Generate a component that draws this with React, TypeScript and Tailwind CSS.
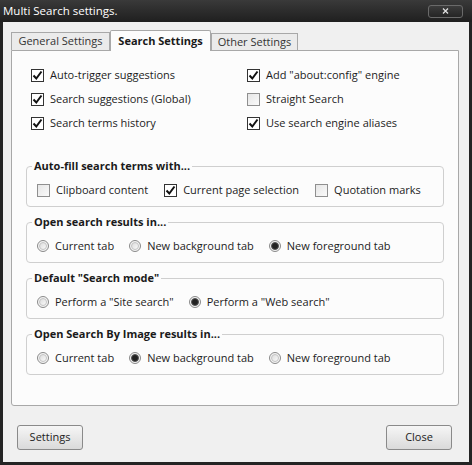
import React from "react";

const font = { fontFamily: '"Open Sans", "Noto Sans", sans-serif' };

function Check({ checked, label }: { checked: boolean; label: string }) {
  return (
    <div className="flex items-center h-[24px]">
      <div
        className={
          "w-[13px] h-[13px] border flex items-center justify-center shrink-0 " +
          (checked ? "border-[#333] bg-white" : "border-[#8f8f8f] bg-gradient-to-br from-[#e6e6e6] to-[#fafafa]")
        }
      >
        {checked && (
          <svg width="11" height="11" viewBox="0 0 11 11">
            <path d="M1.5 5.5 L4.3 8.5 L9.5 1.5" fill="none" stroke="#111" strokeWidth="2" />
          </svg>
        )}
      </div>
      <span className="ml-[6px] whitespace-nowrap">{label}</span>
    </div>
  );
}

function Radio({ checked, label }: { checked: boolean; label: string }) {
  return (
    <div className="flex items-center h-[20px]">
      <div className="w-[12px] h-[12px] rounded-full border border-[#8a8a8a] bg-[#f4f4f4] flex items-center justify-center shrink-0">
        <div
          className={
            "w-[8px] h-[8px] rounded-full " +
            (checked ? "bg-[#222] border border-[#555]" : "border border-[#c4c4c4] bg-gradient-to-br from-[#dcdcdc] to-[#fafafa]")
          }
        />
      </div>
      <span className="ml-[6px] whitespace-nowrap">{label}</span>
    </div>
  );
}

function Group({ title, children }: { title: string; children: React.ReactNode }) {
  return (
    <fieldset className="border border-[#cfcfcf] rounded-[4px] pb-[6px]">
      <legend className="ml-[5px] px-[2px] font-bold leading-[16px] text-[#1a1a1a]">{title}</legend>
      <div className="mt-[6px] pl-[10px] h-[20px] flex items-center">{children}</div>
    </fieldset>
  );
}

export default function App() {
  return (
    <div
      style={font}
      className="w-[472px] h-[465px] bg-[#242424] flex flex-col text-[11px] text-[#1c1c1c] overflow-hidden"
    >
      {/* Title bar */}
      <div className="h-[22px] flex items-center justify-between bg-gradient-to-b from-[#3a3a3a] to-[#1f1f1f] shrink-0">
        <span className="ml-[3px] text-white text-[11.5px] leading-none">Multi Search settings.</span>
        <div className="mr-[9px] w-[35px] h-[13px] rounded-[3px] border border-[#6a6a6a] bg-gradient-to-b from-[#3c3c3c] to-[#252525] flex items-center justify-center">
          <svg width="7" height="6" viewBox="0 0 7 6">
            <path d="M1 0.5 L6 5.5 M6 0.5 L1 5.5" stroke="#e0e0e0" strokeWidth="1.3" />
          </svg>
        </div>
      </div>

      {/* Body */}
      <div className="flex-1 mx-[3px] mb-[3px] bg-[#f0f0f0] flex flex-col px-[8px] pt-[8px]">
        {/* Tabs */}
        <div className="flex items-end h-[20px] relative z-10">
          <div className="h-[18px] w-[99px] border border-[#a8a8a8] border-b-0 bg-[#ebebeb] flex items-center justify-center text-[11px] text-[#333]">
            General Settings
          </div>
          <div className="h-[21px] w-[101px] border border-[#a8a8a8] border-b-0 bg-[#fcfcfc] flex items-center justify-center text-[11px] font-bold text-[#1a1a1a] mb-[-1px] rounded-t-[2px]">
            Search Settings
          </div>
          <div className="h-[17px] w-[87px] border border-[#a8a8a8] border-b-0 bg-[#ebebeb] flex items-center justify-center text-[11px] text-[#333]">
            Other Settings
          </div>
        </div>

        {/* Panel */}
        <div className="w-[448px] h-[356px] border border-[#a8a8a8] bg-[#fcfcfc] rounded-b-[3px] pt-[12px]">
          <div className="grid grid-cols-[216px_1fr] pl-[19px]">
            <Check checked label="Auto-trigger suggestions" />
            <Check checked label={'Add "about:config" engine'} />
            <Check checked label="Search suggestions (Global)" />
            <Check checked={false} label="Straight Search" />
            <Check checked label="Search terms history" />
            <Check checked label="Use search engine aliases" />
          </div>

          <div className="mt-[23px] mx-[14px] flex flex-col gap-[7px]">
            <Group title="Auto-fill search terms with...">
              <div className="flex items-center gap-[16px]">
                <Check checked={false} label="Clipboard content" />
                <Check checked label="Current page selection" />
                <Check checked={false} label="Quotation marks" />
              </div>
            </Group>
            <Group title="Open search results in...">
              <div className="flex items-center gap-[15px]">
                <Radio checked={false} label="Current tab" />
                <Radio checked={false} label="New background tab" />
                <Radio checked label="New foreground tab" />
              </div>
            </Group>
            <Group title={'Default "Search mode"'}>
              <div className="flex items-center gap-[15px]">
                <Radio checked={false} label={'Perform a "Site search"'} />
                <Radio checked label={'Perform a "Web search"'} />
              </div>
            </Group>
            <Group title="Open Search By Image results in...">
              <div className="flex items-center gap-[15px]">
                <Radio checked={false} label="Current tab" />
                <Radio checked label="New background tab" />
                <Radio checked={false} label="New foreground tab" />
              </div>
            </Group>
          </div>
        </div>

        {/* Buttons */}
        <div className="flex justify-between pl-[6px] pr-[9px] mt-[19px]">
          <button className="w-[66px] h-[25px] rounded-[3px] border border-[#8a8a8a] bg-gradient-to-b from-[#f6f6f6] to-[#dadada] text-[11px] text-[#222]">
            Settings
          </button>
          <button className="w-[66px] h-[25px] rounded-[3px] border border-[#8a8a8a] bg-gradient-to-b from-[#f6f6f6] to-[#dadada] text-[11px] text-[#222]">
            Close
          </button>
        </div>
      </div>
    </div>
  );
}
